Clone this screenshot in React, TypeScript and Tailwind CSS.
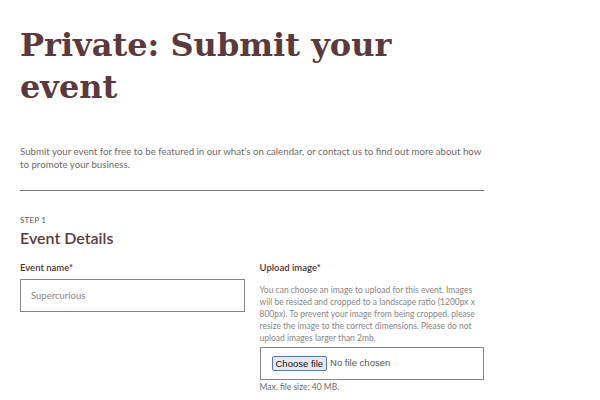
export default function App() {
  return (
    <div className="min-h-screen w-[600px] bg-white px-5 font-['Lato',sans-serif]">
      <h1 className="w-[430px] pt-[24px] font-['DejaVu_Serif',serif] text-[32px] leading-[42px] font-bold text-[#5b3a3d]">
        Private: Submit your event
      </h1>
      <div className="w-[464px]">
        <p className="mt-[37px] text-[9.7px] leading-[13px] text-[#6f6a6a]">
          Submit your event for free to be featured in our what’s on calendar, or contact us to find out more about how to
          promote your business.
        </p>
        <hr className="mt-[19px] border-t-[1.5px] border-[#7b7370]" />
        <div className="mt-[23px] text-[8px] leading-[12px] uppercase tracking-wide text-[#5d5858]">Step 1</div>
        <h2 className="mt-[2px] text-[16px] leading-[20px] font-semibold text-[#5b3a3d]">Event Details</h2>
        <div className="mt-[14px] grid grid-cols-2 gap-[15px]">
          <div>
            <label className="block text-[9.5px] leading-[12px] font-semibold text-[#4a3436]">Event name*</label>
            <input
              className="mt-[5px] h-[33px] w-full border border-[#8a8280] px-[10px] text-[9.5px] text-[#777] outline-none placeholder:text-[#8a8585]"
              placeholder="Supercurious"
            />
          </div>
          <div>
            <label className="block text-[9.5px] leading-[12px] font-semibold text-[#4a3436]">Upload image*</label>
            <p className="mt-[10px] text-[8.5px] leading-[12px] text-[#8a8585]">
              You can choose an image to upload for this event. Images will be resized and cropped to a landscape ratio
              (1200px x 800px). To prevent your image from being cropped, please resize the image to the correct
              dimensions. Please do not upload images larger than 2mb.
            </p>
            <div className="mt-[3px] flex h-[33px] items-center gap-[3px] border border-[#8a8280] px-[11px] font-['Liberation_Sans',sans-serif] text-[9.5px]">
              <span className="rounded-[2px] border border-[#4d78d6] bg-[#e9e9ed] px-[3px] leading-[13px] text-[#111]">
                Choose file
              </span>
              <span className="text-[#555]">No file chosen</span>
            </div>
            <div className="mt-[1px] text-[8.5px] leading-[12px] text-[#6f6a6a]">Max. file size: 40 MB.</div>
          </div>
        </div>
      </div>
    </div>
  );
}
